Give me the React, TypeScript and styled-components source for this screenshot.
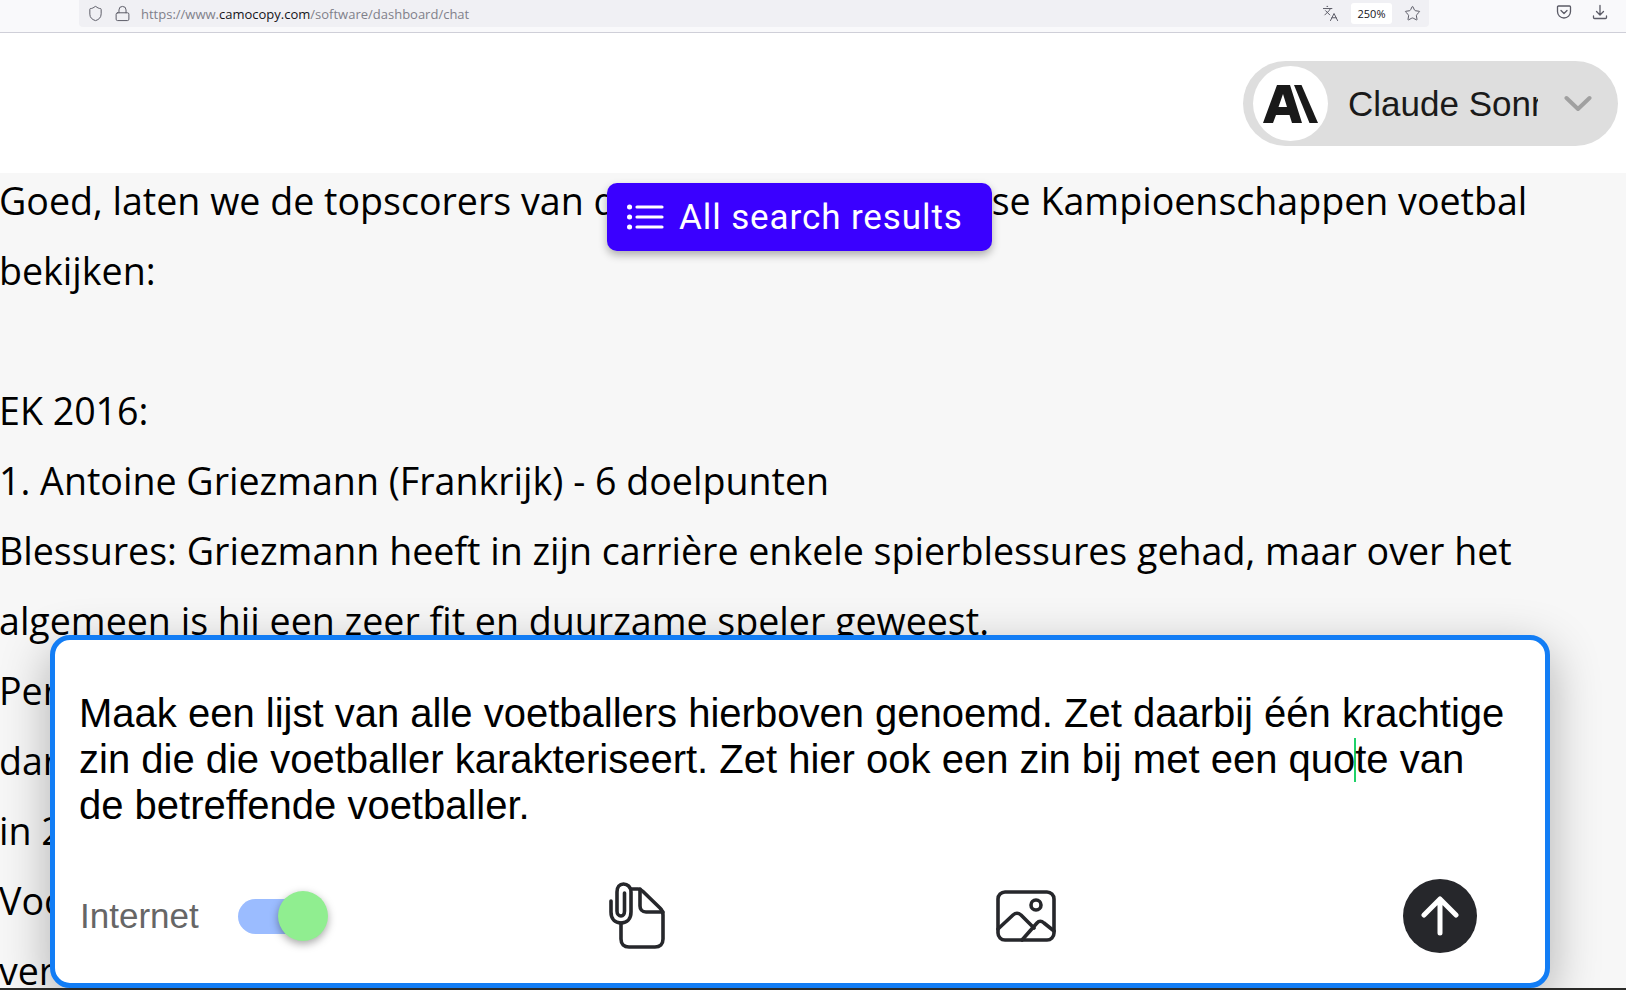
import styled, { createGlobalStyle } from "styled-components";
import { Languages, Lock, Shield, Star } from "lucide-react";

const GlobalStyle = createGlobalStyle`
    html, body {
        margin: 0;
        padding: 0;
        height: 990px;
        overflow: hidden;
        background: #2a2a28;
    }
    * {
        box-sizing: border-box;
    }
`;

const Page = styled.div`
    position: relative;
    width: 1626px;
    height: 988px;
    overflow: hidden;
    display: flex;
    flex-direction: column;
    background: #fff;
`;

const BrowserBar = styled.div`
    height: 33px;
    flex: none;
    display: flex;
    align-items: flex-start;
    padding-left: 79px;
    background: #f9f9fb;
    border-bottom: 1px solid #cfcfd8;
`;

const UrlField = styled.div`
    width: 1350px;
    height: 27px;
    display: flex;
    align-items: center;
    padding: 0 8px 0 8px;
    background: #f0f0f4;
    border-radius: 0 0 4px 4px;
    color: #5b5b66;
`;

const UrlText = styled.div`
    margin-left: 10px;
    flex: 1;
    font: 13px "Open Sans", sans-serif;
    color: #80808a;
    b {
        font-weight: 400;
        color: #15141a;
    }
`;

const ZoomBadge = styled.div`
    width: 41px;
    height: 21px;
    margin: 0 12px;
    display: flex;
    align-items: center;
    justify-content: center;
    background: #fff;
    border-radius: 3px;
    color: #15141a;
    font: 11px "Open Sans", sans-serif;
`;

const BarActions = styled.div`
    display: flex;
    gap: 20px;
    margin-left: 127px;
    padding-top: 4px;
    color: #5b5b66;
`;

const TopRow = styled.header`
    height: 140px;
    flex: none;
    display: flex;
    justify-content: flex-end;
    padding: 28px 8px 0 0;
    background: #fff;
`;

const ModelPill = styled.div`
    width: 375px;
    height: 85px;
    display: flex;
    align-items: center;
    padding-left: 10px;
    background: #dedede;
    border-radius: 43px;
`;

const ModelLogo = styled.div`
    width: 75px;
    height: 75px;
    flex: none;
    display: flex;
    align-items: center;
    justify-content: center;
    background: #fff;
    border-radius: 50%;
`;

const ModelName = styled.div`
    width: 190px;
    margin-left: 20px;
    overflow: hidden;
    white-space: nowrap;
    font: 35px "Liberation Sans", Arial, sans-serif;
    color: #1a1a1a;
`;

const Chevron = styled.svg`
    margin-left: 26px;
`;

const Answer = styled.main`
    flex: 1;
    background: #f7f7f7;
    font: 37.6px "Open Sans", sans-serif;
    color: #000;
`;

const AnswerLine = styled.div`
    height: 70px;
    margin-left: -1px;
    line-height: 56px;
    white-space: nowrap;
`;

const ResultsButton = styled.button`
    position: absolute;
    left: 607px;
    top: 183px;
    width: 385px;
    height: 68px;
    display: flex;
    align-items: center;
    gap: 15px;
    padding: 0 0 0 20px;
    border: 0;
    border-radius: 10px;
    background: #3a00ff;
    color: #fff;
    box-shadow: 0 4px 8px rgba(0, 0, 0, 0.3);
    font: 35px Roboto, sans-serif;
    letter-spacing: 0.9px;
`;

const Composer = styled.section`
    position: absolute;
    left: 50px;
    top: 635px;
    width: 1500px;
    height: 353px;
    display: flex;
    flex-direction: column;
    padding: 50px 24px 0 25px;
    background: #fff;
    border: 5px solid #127df5;
    border-radius: 20px;
    box-shadow: 0 15px 50px rgba(0, 0, 0, 0.3);
`;

const Prompt = styled.div`
    height: 138px;
    margin-left: -1px;
    font: 40px/46px "Liberation Sans", Arial, sans-serif;
    color: #000;
    white-space: nowrap;
`;

const Caret = styled.span`
    display: inline-block;
    width: 2px;
    height: 44px;
    margin: 0 -1px;
    vertical-align: -9px;
    background: #1fd168;
`;

const Tools = styled.div`
    margin-top: 51px;
    display: grid;
    grid-template-columns: 528px 388px 407px 74px;
    align-items: center;
`;

const InternetGroup = styled.div`
    display: flex;
    align-items: center;
`;

const InternetLabel = styled.span`
    width: 158px;
    font: 35px "Liberation Sans", Arial, sans-serif;
    color: #666;
`;

const Track = styled.div`
    position: relative;
    width: 64px;
    height: 35px;
    background: #9bbcff;
    border-radius: 18px;
`;

const Thumb = styled.div`
    position: absolute;
    left: 40px;
    top: -8px;
    width: 50px;
    height: 50px;
    background: #90ee90;
    border-radius: 50%;
    box-shadow: 0 3px 8px rgba(0, 0, 0, 0.35);
`;

const SendButton = styled.button`
    width: 74px;
    height: 74px;
    padding: 0;
    display: flex;
    align-items: center;
    justify-content: center;
    border: 0;
    border-radius: 50%;
    background: #26272b;
`;

const answerLines = [
    "Goed, laten we de topscorers van de voorgaande Europese Kampioenschappen voetbal",
    "bekijken:",
    "",
    "EK 2016:",
    "1. Antoine Griezmann (Frankrijk) - 6 doelpunten",
    "Blessures: Griezmann heeft in zijn carrière enkele spierblessures gehad, maar over het",
    "algemeen is hij een zeer fit en duurzame speler geweest.",
    "Persoonlijk: Griezmann is getrouwd",
    "darmproblemen",
    "in 2",
    "Voor",
    "ver",
];

function App() {
    return (
        <Page>
            <GlobalStyle />
            <BrowserBar>
                <UrlField>
                    <Shield size={17} strokeWidth={1.4} />
                    <Lock size={17} strokeWidth={1.4} style={{ marginLeft: 10 }} />
                    <UrlText>
                        https://www.<b>camocopy.com</b>/software/dashboard/chat
                    </UrlText>
                    <Languages size={17} strokeWidth={1.4} />
                    <ZoomBadge>250%</ZoomBadge>
                    <Star size={17} strokeWidth={1.4} />
                </UrlField>
                <BarActions>
                    <svg width="16" height="16" viewBox="0 0 16 16" fill="none" stroke="currentColor" strokeWidth="1.3" strokeLinecap="round" strokeLinejoin="round">
                        <path d="M2.5 2h11a1 1 0 0 1 1 1v4.5a6.5 6.5 0 0 1-13 0V3a1 1 0 0 1 1-1z" />
                        <path d="M5 6.5 8 9.5 11 6.5" />
                    </svg>
                    <svg width="16" height="16" viewBox="0 0 16 16" fill="none" stroke="currentColor" strokeWidth="1.3" strokeLinecap="round" strokeLinejoin="round">
                        <path d="M8 1.5v9M4.5 7.5 8 11l3.5-3.5M1.5 12v1.5a1 1 0 0 0 1 1h11a1 1 0 0 0 1-1V12" />
                    </svg>
                </BarActions>
            </BrowserBar>
            <TopRow>
                <ModelPill>
                    <ModelLogo>
                        <svg width="55" height="38" viewBox="0 0 55 38" fill="#191919">
                            <path d="M0 38 14 0H27L39 38H29L26.5 30H13L10 38ZM15.500 22H24L20 9Z" fillRule="evenodd" />
                            <path d="M31 0H38.500L55 38H46.500Z" />
                        </svg>
                    </ModelLogo>
                    <ModelName>Claude Sonnet</ModelName>
                    <Chevron width="28" height="17" viewBox="0 0 28 17" fill="none" stroke="#a0a0a0" strokeWidth="4" strokeLinecap="round" strokeLinejoin="round">
                        <path d="M2.500 3 14 14 25.500 3" />
                    </Chevron>
                </ModelPill>
            </TopRow>
            <Answer>
                {answerLines.map((line, i) => (
                    <AnswerLine key={i}>{line}</AnswerLine>
                ))}
            </Answer>
            <ResultsButton>
                <svg width="37" height="26" viewBox="0 0 37 26" fill="none" stroke="#fff" strokeWidth="3.200" strokeLinecap="round">
                    <path d="M10 3h25M10 13h25M10 23h25" />
                    <path d="M2.500 3h.1M2.500 13h.1M2.500 23h.1" strokeWidth="5" />
                </svg>
                All search results
            </ResultsButton>
            <Composer>
                <Prompt>
                    Maak een lijst van alle voetballers hierboven genoemd. Zet daarbij één krachtige
                    <br />
                    zin die die voetballer karakteriseert. Zet hier ook een zin bij met een quo
                    <Caret />
                    te van
                    <br />
                    de betreffende voetballer.
                </Prompt>
                <Tools>
                    <InternetGroup>
                        <InternetLabel>Internet</InternetLabel>
                        <Track>
                            <Thumb />
                        </Track>
                    </InternetGroup>
                    <svg width="58" height="68" viewBox="0 0 58 68" fill="none" stroke="#26272b" strokeWidth="3.600" strokeLinecap="round" strokeLinejoin="round">
                        <path d="M3 19V30C3 37 7 41 13 41C19 41 23 37 23 30V10C23 5 19.500 2 15.500 2C11.500 2 9 5 9 10V29C9 32 11 34 13 34C15 34 16.500 32 16.500 29V11" />
                        <path d="M24 7H30C32 7 33.500 8 35 9.500L52 26C54 28 55 30 55 33V57C55 62 52 65 47 65H21C16 65 13 62 13 57V41" />
                        <path d="M32 7V24C32 27 34 30 38 30H55" />
                    </svg>
                    <svg width="60" height="52" viewBox="0 0 60 52" fill="none" stroke="#26272b" strokeWidth="3.600" strokeLinecap="round" strokeLinejoin="round">
                        <rect x="2" y="2" width="56" height="48" rx="7" />
                        <circle cx="40" cy="15" r="5" />
                        <path d="M2 39 17 25Q21 21.500 25 25L38 38" />
                        <path d="M26 50 41 33Q44 29.500 48 33L58 41" />
                    </svg>
                    <SendButton>
                        <svg width="38" height="40" viewBox="0 0 38 40" fill="none" stroke="#fff" strokeWidth="5" strokeLinecap="round" strokeLinejoin="round">
                            <path d="M19 37V3M3 19 19 3 35 19" />
                        </svg>
                    </SendButton>
                </Tools>
            </Composer>
        </Page>
    );
}

export default App;
